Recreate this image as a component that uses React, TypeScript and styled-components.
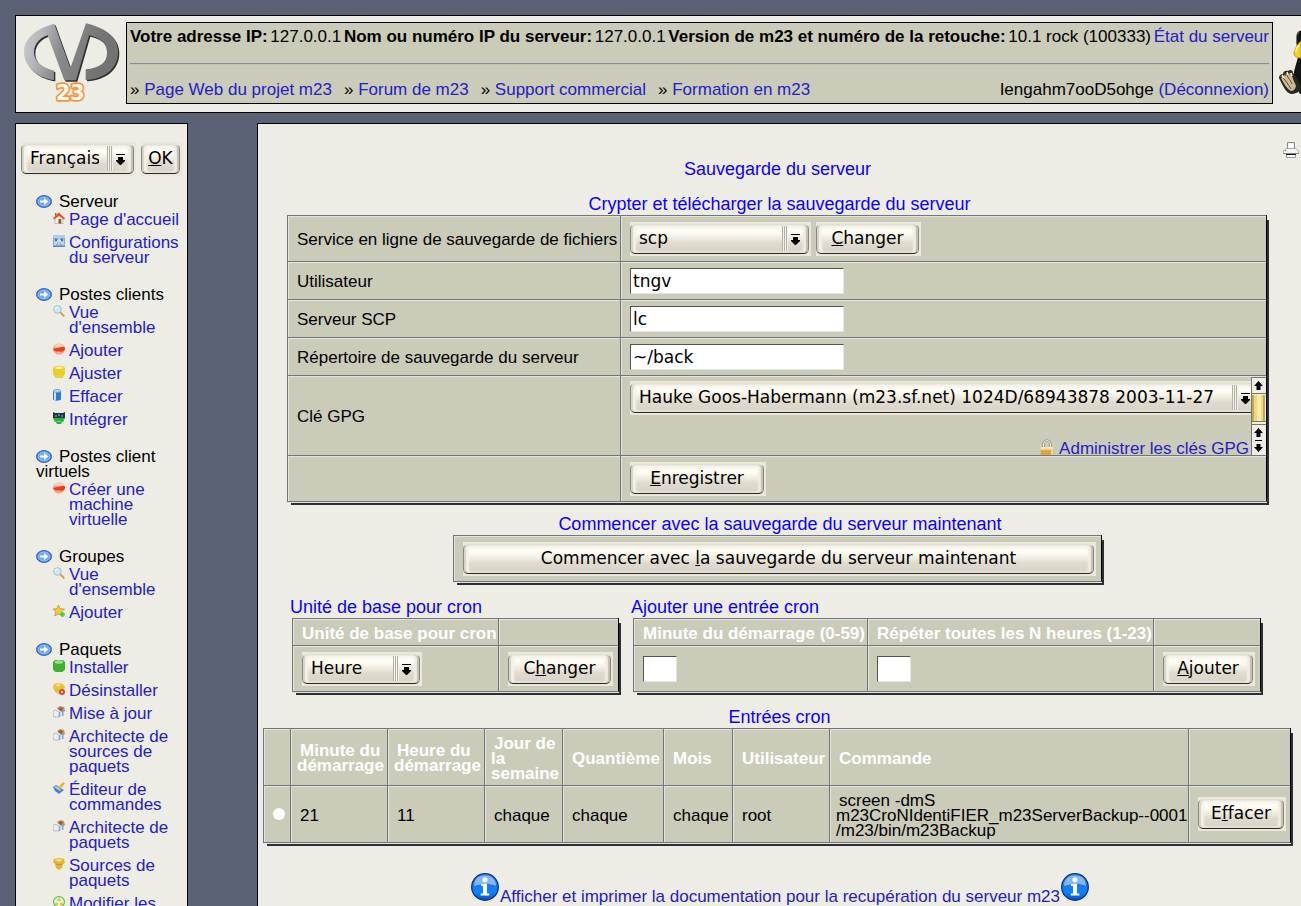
import React from "react";
import styled, { createGlobalStyle } from "styled-components";

const color = {
  page: "#5a6375",
  panel: "#eeede5",
  cell: "#cbcbb9",
  line: "#74757a",
  glint: "#e4e4de",
  shadow: "#2e2f34",
  link: "#2520c6",
  title: "#0b00ff",
  halo: "#ebe7db",
};

const GlobalStyle = createGlobalStyle`
  * { box-sizing: border-box; }
  body {
    margin: 0;
    background: ${color.page};
    color: #000;
    font: 17px/15px "Liberation Sans", Arial, sans-serif;
  }
  a { color: ${color.link}; text-decoration: none; }
  svg { display: block; flex: none; }
`;

const Page = styled.div`
  display: flex;
  flex-direction: column;
  gap: 10px;
  height: 100vh;
  overflow: hidden;
  padding: 15px 0 0 15px;
`;

/* ---------- header ---------- */

const Header = styled.header`
  display: flex;
  flex: none;
  padding: 6px 0 8px;
  background: ${color.panel};
  border: 1px solid #000;
  border-right: 0;
`;

const LogoLink = styled.a`
  flex: none;
  width: 110px;
  padding-left: 6px;
`;

const InfoBox = styled.div`
  flex: 1;
  min-width: 0;
  padding: 4px 3px 3px;
  background: ${color.cell};
  border: 1px solid #000;
  line-height: 20px;
  white-space: nowrap;
`;

const Rule = styled.hr`
  margin: 16px 0 15px;
  border: 0;
  border-top: 1px solid #8a8b92;
  border-bottom: 1px solid #c2c2bc;
`;

const InfoRow = styled.div`
  display: flex;
  justify-content: space-between;
`;

const HeaderLinks = styled.nav`
  display: flex;
  gap: 12px;
`;

const Mascot = styled.div`
  flex: none;
  width: 28px;
  padding: 4px 0 0 6px;
  overflow: hidden;
`;

/* ---------- columns ---------- */

const Columns = styled.div`
  display: flex;
  flex: 1 0 auto;
  gap: 69px;
`;

const Sidebar = styled.aside`
  flex: none;
  width: 173px;
  padding: 18px 5px 0;
  background: ${color.panel};
  border: 1px solid #000;
`;

const Main = styled.main`
  flex: 1;
  min-width: 0;
  padding-top: 18px;
  background: ${color.panel};
  border: 1px solid #000;
  border-right: 0;
`;

/* ---------- controls ---------- */

const Halo = styled.span<{ $w?: number; $fill?: boolean }>`
  display: ${(p) => (p.$fill ? "flex" : "inline-flex")};
  flex: none;
  position: relative;
  width: ${(p) => (p.$w ? p.$w + "px" : "auto")};
  height: 34px;
  margin-left: ${(p) => (p.$fill ? "3px" : "0")};
  padding: 2px 2px 2px 0;
  background: ${color.halo};
  text-indent: 0;
  vertical-align: middle;
`;

const face = `
  width: 100%;
  height: 30px;
  margin: 0;
  border: 1px solid #8b897f;
  border-top-color: #e2dfd2;
  border-bottom-color: #2b2a28;
  border-radius: 5px;
  background: linear-gradient(#f3f0e4 0, #fffef6 20%, #fbf9ee 32%, #dedacd 66%, #d9d5c8 90%, #e6e3d8 100%);
  box-shadow: inset 2px 0 1px #d6d3c7, inset -2px 0 1px #c2bfb3, inset 5px 0 2px #f4f2e9, inset -5px 0 2px #f0ede2;
  color: #000;
  font: 17px/20px "DejaVu Sans", Verdana, sans-serif;
  font-variant-ligatures: none;
`;

const Face = styled.button`
  ${face}
  padding: 0 0 2px;
  text-align: center;
  white-space: nowrap;
`;

const SelectFace = styled.select`
  ${face}
  appearance: none;
  padding: 0 34px 2px 8px;
`;

const Grip = styled.svg`
  position: absolute;
  top: 3px;
  right: 6px;
  pointer-events: none;
`;

const TextInput = styled.input<{ $w: number }>`
  display: block;
  width: ${(p) => p.$w}px;
  height: 26px;
  margin: 0;
  padding: 0 2px;
  border: 1px solid #55554f;
  border-right-color: #e4e4e0;
  border-bottom-color: #e4e4e0;
  border-radius: 0;
  background: #fff;
  color: #000;
  font: 17px/20px "DejaVu Sans", Verdana, sans-serif;
`;

const Radio = styled.input`
  appearance: none;
  display: block;
  width: 12px;
  height: 12px;
  margin: 0;
  border-radius: 50%;
  background: #fdfdfd;
`;

const Controls = styled.div`
  display: flex;
  gap: 5px;
`;

const LangBar = styled.form`
  display: flex;
  gap: 5px;
  margin-bottom: 18px;
`;

function PushButton({ w, fill, children }: { w?: number; fill?: boolean; children: React.ReactNode }) {
  return (
    <Halo $w={w} $fill={fill}>
      <Face type="button">{children}</Face>
    </Halo>
  );
}

function Dropdown({ w, label, value }: { w: number; label: string; value: string }) {
  return (
    <Halo $w={w}>
      <SelectFace aria-label={label}>
        <option>{value}</option>
      </SelectFace>
      <Grip width="23" height="27" viewBox="0 0 23 27">
        <path d="M0 1v25M2 1v25M4 1v25" transform="translate(.5)" stroke="#b5b3a6" />
        <path d="M1 1v25M3 1v25M5 1v25" transform="translate(.5)" stroke="#f4f2e8" />
        <path d="M9 9h9v1H9zM11 12h5v3h2v1l-4 4h-1l-4-4v-1h2z" />
      </Grip>
    </Halo>
  );
}

/* ---------- navigation ---------- */

const NavGroup = styled.section`
  padding-left: 15px;
  margin-bottom: 22px;
`;

const NavHeading = styled.h2`
  margin: 0 0 3px;
  font-size: 17px;
  font-weight: 400;
  line-height: 15px;
  svg { display: inline-block; margin-right: 7px; vertical-align: -1px; }
`;

const NavList = styled.ul`
  display: flex;
  flex-direction: column;
  gap: 8px;
  margin: 0;
  padding: 0 0 0 17px;
  list-style: none;
`;

const NavItem = styled.li`
  display: flex;
  gap: 4px;
`;

type IconName =
  | "home" | "config" | "lens" | "red" | "yellow" | "can" | "alien" | "star"
  | "green" | "remove" | "package" | "pencil" | "source" | "recycle";

const icons: Record<IconName, React.ReactNode> = {
  home: (
    <>
      <path d="M2 6v5.500h8V6L6 2z" fill="#f3efe6" stroke="#b5aa98" strokeWidth=".7" />
      <path d="M0 6.500 5.800.5 12 6.500l-1 1L6 4 1 7.500z" fill="#e8501c" />
      <path d="M2 1h1.500v2L2 4.300z" fill="#c9521f" />
      <path d="M5.500 7h2.700v4.500H5.500z" fill="#8a5a2e" />
    </>
  ),
  config: (
    <>
      <path d="M0 0h12v12H0z" fill="#86a9d6" />
      <path d="M0 0h12v3H0z" fill="#b3cdec" />
      <path d="M2 4v6M5 5l-2 4M6 3v7M7 5l2 4M10 4v6" stroke="#e4edf9" strokeWidth="1.100" />
      <circle cx="3" cy="5" r="1.200" fill="#3f6cab" />
      <circle cx="9" cy="5" r="1.200" fill="#3f6cab" />
      <path d="M0 11.500h12" stroke="#5d80b5" />
    </>
  ),
  lens: (
    <>
      <path d="m7 7 4.300 4.300" stroke="#d09a52" strokeWidth="1.800" />
      <circle cx="4.500" cy="4.500" r="3.800" fill="#cfeaf6" stroke="#9db6c6" strokeWidth=".9" />
      <path d="M2.200 4.200a2.500 2.500 0 0 1 2.500-2.300" stroke="#fff" fill="none" />
    </>
  ),
  red: (
    <>
      <ellipse cx="6" cy="6" rx="6" ry="5.500" fill="#f5a48c" />
      <path d="M0 5.500C3 6.500 8 3 12 4.500 12.500 8.500 9 9 6 8.500 3 8.500 0 8 0 5.500z" fill="#ee3d15" />
      <ellipse cx="6" cy="2.600" rx="4.300" ry="1.600" fill="#f9d2c6" />
    </>
  ),
  yellow: (
    <>
      <path d="M2 0h8l2 2v6l-2.500 4h-7L0 8V2z" fill="#ebcf24" />
      <ellipse cx="6" cy="1.800" rx="4" ry="1.200" fill="#f7f0b8" />
      <path d="M1 9h10l-2 2H3z" fill="#e6d45a" />
    </>
  ),
  can: (
    <>
      <path d="M0 2v8.500c1.500 1.500 6.500 1.500 8 0V2z" fill="#2d79d4" />
      <path d="M1 3v7.500l2 .7V3z" fill="#cfe6fb" />
      <ellipse cx="4" cy="1.900" rx="3.800" ry="1.500" fill="#b9d7f3" stroke="#4683c4" strokeWidth=".6" />
    </>
  ),
  alien: (
    <>
      <path d="M0 0 2 1h8l2-1v6H0z" fill="#20323a" />
      <path d="M2 3h2v2H2zM5 2h2v2H5zM8 3h2v2H8z" fill="#4f7f9a" />
      <path d="M0 6h12l-2 4H9l-1 2H4l-1-2H2z" fill="#21b53c" />
      <path d="M4 9h4v1H4z" fill="#6ee66b" />
    </>
  ),
  star: (
    <>
      <path d="m5.500 0 1.600 3.700 4.400.3-3.200 2.800 1 4-3.800-2L1.800 11l1-4.200L0 4l4-.4z" fill="#f2cb30" stroke="#b88f28" strokeWidth=".7" />
      <path d="M7 8.500h1.500V7h2v1.500H12v2h-1.500V12h-2v-1.500H7z" fill="#2fd23c" />
    </>
  ),
  green: (
    <>
      <path d="M2 0h8l2 2v7.500L9.500 12h-7L0 9.500V2z" fill="#3fb12c" />
      <ellipse cx="6" cy="2" rx="4.200" ry="1.800" fill="#9fd6a2" />
    </>
  ),
  remove: (
    <>
      <path d="m1 1 4-1 5 1 2 3-2 4-4 3-4-2-2-4z" fill="#eebf38" />
      <path d="m2 2 3-1 3 1-3 2z" fill="#f8e494" />
      <circle cx="9" cy="9" r="3" fill="#e6452c" />
      <path d="M8 8l2 2M10 8l-2 2" stroke="#fff" strokeWidth=".9" />
    </>
  ),
  package: (
    <>
      <path d="m4 2 3-2 4 1 1 4-3 2z" fill="#c09460" />
      <path d="m5 3 3-2 2 2-2 2z" fill="#8a6238" />
      <path d="M0 6c0-2 3-2 4-1l2 1v5H1c-1-1-1-4-1-5z" fill="#eceef1" stroke="#a9adb5" strokeWidth=".8" />
      <path d="M6 6h1.500v5H6zM9 5h1.500v5H9z" fill="#7aa3dc" />
      <path d="M7.500 6H9v5H7.500z" fill="#dbe6f5" />
    </>
  ),
  pencil: (
    <>
      <path d="M0 5l3-2 3 2 5 3-5 4L2 9z" fill="#4d7fd0" />
      <path d="m1 5 2-1 5 4-1 1z" fill="#b5cdf0" />
      <path d="m5 5.500 5-5.500 2 1.500-5 6z" fill="#efb52a" />
    </>
  ),
  source: (
    <>
      <path d="m1 1 5-1 5 1 1 4-2 1-1 4-3 2-3-2-1-4-2-2z" fill="#e5b52c" />
      <path d="m2 2 4-1 4 1-4 2z" fill="#f9e48e" />
      <path d="M3 6l3 1 3-1" stroke="#b5841c" fill="none" strokeWidth=".8" />
    </>
  ),
  recycle: (
    <>
      <circle cx="6" cy="6" r="5.400" fill="#effbe8" stroke="#3fcf3a" strokeWidth="1.200" />
      <circle cx="6" cy="3.800" r="1.600" fill="#e8b92c" />
      <circle cx="3.600" cy="8" r="1.600" fill="#e8b92c" />
      <circle cx="8.400" cy="8" r="1.600" fill="#e8b92c" />
    </>
  ),
};

function ArrowBadge() {
  return (
    <svg width="16" height="13" viewBox="0 0 16 13" aria-hidden="true">
      <ellipse cx="8" cy="6.500" rx="7.600" ry="6" fill="#3f7fe6" stroke="#2a50ac" strokeWidth=".8" />
      <ellipse cx="8" cy="6.500" rx="5.800" ry="4.500" fill="#6ba8fa" stroke="#b9d4fb" strokeWidth=".7" />
      <path d="M4 5.500h4V3l4.300 3.500L8 10V7.500H4z" fill="#fff" />
    </svg>
  );
}

const nav: { title: string; items: [IconName, string][] }[] = [
  { title: "Serveur", items: [["home", "Page d'accueil"], ["config", "Configurations du serveur"]] },
  {
    title: "Postes clients",
    items: [["lens", "Vue d'ensemble"], ["red", "Ajouter"], ["yellow", "Ajuster"], ["can", "Effacer"], ["alien", "Intégrer"]],
  },
  { title: "Postes client virtuels", items: [["red", "Créer une machine virtuelle"]] },
  { title: "Groupes", items: [["lens", "Vue d'ensemble"], ["star", "Ajouter"]] },
  {
    title: "Paquets",
    items: [
      ["green", "Installer"],
      ["remove", "Désinstaller"],
      ["package", "Mise à jour"],
      ["package", "Architecte de sources de paquets"],
      ["pencil", "Éditeur de commandes"],
      ["package", "Architecte de paquets"],
      ["source", "Sources de paquets"],
      ["recycle", "Modifier les"],
    ],
  },
];

/* ---------- main content ---------- */

const PrintBar = styled.div`
  display: flex;
  justify-content: flex-end;
  padding-right: 2px;
`;

const Body = styled.div`
  display: flex;
  flex-direction: column;
  align-items: center;
  gap: 12px;
  padding: 1px 4px 0 0;
`;

const Heading = styled.h1`
  margin: 0 0 3px;
  color: ${color.title};
  font-size: 18px;
  font-weight: 400;
  line-height: 20px;
`;

const Block = styled.section<{ $inset?: string; $fit?: boolean; $spaced?: boolean }>`
  width: ${(p) => (p.$fit ? "auto" : "100%")};
  margin-top: ${(p) => (p.$spaced ? "3px" : "0")};
  padding: ${(p) => p.$inset || "0"};
`;

const BlockTitle = styled.h2<{ $left?: boolean }>`
  margin: 0;
  padding-left: ${(p) => (p.$left ? "0" : "5px")};
  color: ${color.title};
  font-size: 18px;
  font-weight: 400;
  line-height: 21px;
  text-align: ${(p) => (p.$left ? "left" : "center")};
`;

const Pair = styled.div`
  display: flex;
  gap: 10px;
  margin-top: 3px;
  padding-right: 2px;
`;

const Indent = styled.div`
  padding: 0 2px;
`;

const Grid = styled.table<{ $w?: number }>`
  width: ${(p) => (p.$w ? p.$w + "px" : "100%")};
  table-layout: fixed;
  border-collapse: separate;
  border-spacing: 0;
  border-right: 1px solid #000;
  border-bottom: 1px solid ${color.line};
  background: ${color.cell};
  box-shadow: 0 1px 0 ${color.glint}, 3px 4px 0 -1px ${color.shadow};
`;

const cell = `
  padding: 0 0 0 6px;
  border: 0 solid ${color.line};
  border-width: 1px 0 0 1px;
  box-shadow: inset 1px 1px 0 ${color.glint};
  text-align: left;
  text-indent: 3px;
  vertical-align: middle;
`;

const Td = styled.td<{ $h: number }>`
  ${cell}
  height: ${(p) => p.$h}px;
  & > ${Controls}, & > ${TextInput}, & > ${Radio} {
    margin-left: 3px;
    text-indent: 0;
  }
`;

const TextCell = styled(Td)`
  padding-top: 2px;
`;

const LabelCell = styled.th<{ $h: number }>`
  ${cell}
  height: ${(p) => p.$h}px;
  padding-top: 2px;
  font-weight: 400;
`;

const HeadCell = styled.th<{ $h: number }>`
  ${cell}
  height: ${(p) => p.$h}px;
  padding-top: 2px;
  color: #fff;
  font-weight: 700;
`;

const StartCell = styled(Td)`
  padding-right: 5px;
`;

const KeyCell = styled.td`
  ${cell}
  height: 80px;
  padding: 1px 0 0 9px;
  text-indent: 0;
`;

const KeyPane = styled.div`
  display: flex;
  height: 78px;
  overflow: hidden;
`;

const KeyContent = styled.div`
  flex: 1;
  min-width: 0;
  padding-top: 4px;
  overflow: hidden;
`;

const KeyLink = styled.a`
  display: flex;
  justify-content: flex-end;
  gap: 5px;
  margin-top: 24px;
  padding-right: 2px;
  line-height: 20px;
`;

const Token = styled.span`
  white-space: nowrap;
`;

const DocLink = styled.a`
  display: flex;
  gap: 1px;
  margin-top: 18px;
  padding-left: 5px;
  span { padding-top: 14px; line-height: 20px; }
`;

function Logo() {
  return (
    <svg width="100" height="82" viewBox="66 66 300 246" role="img" aria-label="m23">
      <defs>
        <linearGradient id="metal" x1="72" y1="100" x2="300" y2="170" gradientUnits="userSpaceOnUse">
          <stop offset="0" stopColor="#c9cbcc" />
          <stop offset=".22" stopColor="#b4b6b8" />
          <stop offset=".5" stopColor="#8a8b8c" />
          <stop offset="1" stopColor="#737373" />
        </linearGradient>
        <path
          id="mark"
          d="M160 72C110 85 72 115 72 155C72 205 120 235 162 240L162 212C130 204 102 188 102 157C102 131 122 112 143 106L193 241L228 241L267 106C300 112 321 130 321 158C321 187 300 204 257 208L257 240C315 236 354 205 354 155C354 108 310 82 258 70L211 205L163 72Z"
        />
      </defs>
      <use href="#mark" x="4" y="4" fill="#2f2f30" />
      <use href="#mark" fill="url(#metal)" />
      <text
        x="211"
        y="300"
        textAnchor="middle"
        fontFamily="DejaVu Sans, sans-serif"
        fontWeight="700"
        fontSize="62"
        fill="#fffbe6"
        stroke="#f29444"
        strokeWidth="10"
        strokeLinejoin="round"
        paintOrder="stroke"
      >
        23
      </text>
    </svg>
  );
}

function Penguin() {
  return (
    <svg width="66" height="72" viewBox="0 0 66 72" aria-hidden="true">
      <path d="M18 7c2-3 8-4 14-3v64H21C16 58 13 50 16 42c2-8 4-12 3-18-2-5-2-11-1-17z" fill="#141414" />
      <path d="M20 6c-3 3-3 6-2 10" stroke="#777" fill="none" strokeWidth="1" />
      <path d="M22 15c-3 2-7 9-7 13 0 2 3 4 7 4z" fill="#f4d21c" stroke="#a98a12" strokeWidth=".7" />
      <path d="M20 19c-2 2-3 5-3 7" stroke="#fff6a8" fill="none" strokeWidth="1.500" />
      <path d="M0 52c0-3 2-4 4-4 0-3 3-4 5-3 2-2 5-1 5 2 4 4 6 9 8 14-1 5-5 7-10 7-5-1-8-8-12-16z" fill="#2a2620" />
      <path d="M2 52c0-2 2-3 3-2 1-3 3-3 4-2 2-2 4 0 4 2 1 4 3 7 4 10-1 4-3 5-5 5-4-2-7-7-10-13z" fill="#cdbb96" />
      <path d="M4 52c3 3 5 6 8 11M8 49c1 3 4 6 5 9M1 50l2 2M6 47l1 3M11 46v3" stroke="#5e4824" fill="none" />
      <path d="M3 49l2 3M8 46l1 3M12 47l1 3" stroke="#fff" strokeWidth="1.400" />
    </svg>
  );
}

function Printer() {
  return (
    <svg width="16" height="16" viewBox="0 0 16 16" aria-hidden="true">
      <path d="M4.500.5h7v6h-7z" fill="#fafafa" stroke="#8a8a8a" />
      <path d="M3 6.500h10l2.500 2.500v2.500H.5V9z" fill="#f4f4f4" stroke="#aaa" />
      <path d="M.5 11.500h15" stroke="#888" />
      <path d="M3 12.500h10" stroke="#111" />
      <path d="M3.500 13v2.500h9V13" fill="#fdfdfd" stroke="#999" />
      <path d="M2 8.500h1" stroke="#57b04a" />
    </svg>
  );
}

function Lock() {
  return (
    <svg width="14" height="17" viewBox="0 0 14 17" aria-hidden="true">
      <path d="M3.500 9V5a3.500 3.500 0 0 1 7 0v4" fill="none" stroke="#8d8d88" strokeWidth="2.200" />
      <path d="M3.500 8V5a3.500 3.500 0 0 1 7 0v3" fill="none" stroke="#f0f0ea" strokeWidth="1" />
      <path d="M.5 8h13v8H.5z" fill="#eab04a" />
      <path d="M.5 8h13v2.500H.5z" fill="#f7e4b0" />
      <path d="M1 12.500h11M1 14.500h11" stroke="#d9952f" />
      <path d="M11 10h2v6h-2z" fill="#e9d9b0" />
    </svg>
  );
}

function InfoBadge({ id }: { id: string }) {
  return (
    <svg width="28" height="28" viewBox="0 0 28 28" aria-hidden="true">
      <defs>
        <linearGradient id={id} x1="0" y1="0" x2="0" y2="1">
          <stop offset="0" stopColor="#3f8fe4" />
          <stop offset=".45" stopColor="#1c78e6" />
          <stop offset=".7" stopColor="#0a86ff" />
          <stop offset="1" stopColor="#0b4fb8" />
        </linearGradient>
      </defs>
      <circle cx="14" cy="14" r="13.300" fill={`url(#${id})`} stroke="#0c2f86" strokeWidth="1.300" />
      <path d="M3 13C3 6 8 2.500 14 2.500S25 6 25 13c-6-3-15-2-22 0z" fill="#a9d0f6" opacity=".7" />
      <circle cx="14" cy="6.800" r="2.600" fill="#fff" />
      <path d="M10 11h6v9.500h2.300V22.500H9.700V20.500H12V13h-2z" fill="#fff" />
    </svg>
  );
}

function Scroller() {
  return (
    <svg width="15" height="78" viewBox="0 0 15 78" aria-hidden="true">
      <path d="M0 0h15v78H0z" fill="#efede4" />
      <path d="M.5 78V.5H15M0 16.500h15M0 44.500h15M0 47.500h15" stroke="#77776f" fill="none" />
      <path d="M7.500 4 12 9H9.500v4h-4V9H3z" />
      <path d="M1 18h13v26H1z" fill="#f0d87c" />
      <path d="M1 18h2v26H1zM12 18h2v26h-2z" fill="#c4a750" />
      <path d="M6 18h4v26H6z" fill="#fbecaa" />
      <path d="M7.500 51 12 56H9.500v4h-4v-4H3zM4 63h7v1H4zM5.500 67h4v3H12l-4.500 5L3 70h2.500z" />
    </svg>
  );
}

function TopBar() {
  const links = ["Page Web du projet m23", "Forum de m23", "Support commercial", "Formation en m23"];
  return (
    <Header>
      <LogoLink href="#"><Logo /></LogoLink>
      <InfoBox>
        <InfoRow>
          <b>Votre adresse IP:</b>
          <span>127.0.0.1</span>
          <b>Nom ou numéro IP du serveur:</b>
          <span>127.0.0.1</span>
          <b>Version de m23 et numéro de la retouche:</b>
          <span>10.1 rock (100333)</span>
          <a href="#">État du serveur</a>
        </InfoRow>
        <Rule />
        <InfoRow>
          <HeaderLinks>
            {links.map((l) => (
              <span key={l}>» <a href="#">{l}</a></span>
            ))}
          </HeaderLinks>
          <span>Iengahm7ooD5ohge <a href="#">(Déconnexion)</a></span>
        </InfoRow>
      </InfoBox>
      <Mascot><Penguin /></Mascot>
    </Header>
  );
}

function Navigation() {
  return (
    <Sidebar>
      <LangBar>
        <Dropdown w={115} label="Langue" value="Français" />
        <PushButton w={41}><u>O</u>K</PushButton>
      </LangBar>
      <nav>
        {nav.map((group) => (
          <NavGroup key={group.title}>
            <NavHeading><ArrowBadge />{group.title}</NavHeading>
            <NavList>
              {group.items.map(([icon, text]) => (
                <NavItem key={text}>
                  <svg width="12" height="12" viewBox="0 0 12 12" aria-hidden="true">{icons[icon]}</svg>
                  <a href="#">{text}</a>
                </NavItem>
              ))}
            </NavList>
          </NavGroup>
        ))}
      </nav>
    </Sidebar>
  );
}

const uploadFields: [string, string, string][] = [
  ["user", "Utilisateur", "tngv"],
  ["host", "Serveur SCP", "lc"],
  ["path", "Répertoire de sauvegarde du serveur", "~/back"],
];

function UploadForm() {
  return (
    <Block $inset="0 30px 0 29px">
      <BlockTitle>Crypter et télécharger la sauvegarde du serveur</BlockTitle>
      <Grid>
        <colgroup><col style={{ width: 333 }} /><col /></colgroup>
        <tbody>
          <tr>
            <LabelCell scope="row" $h={46}>Service en ligne de sauvegarde de fichiers</LabelCell>
            <Td $h={46}>
              <Controls>
                <Dropdown w={181} label="Service en ligne de sauvegarde de fichiers" value="scp" />
                <PushButton w={105}><u>C</u>hanger</PushButton>
              </Controls>
            </Td>
          </tr>
          {uploadFields.map(([id, label, value]) => (
            <tr key={id}>
              <LabelCell scope="row" $h={38}><label htmlFor={id}>{label}</label></LabelCell>
              <Td $h={38}><TextInput id={id} $w={214} defaultValue={value} /></Td>
            </tr>
          ))}
          <tr>
            <LabelCell scope="row" $h={80}>Clé GPG</LabelCell>
            <KeyCell>
              <KeyPane>
                <KeyContent>
                  <Dropdown w={631} label="Clé GPG" value="Hauke Goos-Habermann (m23.sf.net) 1024D/68943878 2003-11-27" />
                  <KeyLink href="#"><Lock />Administrer les clés GPG</KeyLink>
                </KeyContent>
                <Scroller />
              </KeyPane>
            </KeyCell>
          </tr>
          <tr>
            <LabelCell scope="row" $h={46} />
            <Td $h={46}><PushButton w={136}><u>E</u>nregistrer</PushButton></Td>
          </tr>
        </tbody>
      </Grid>
    </Block>
  );
}

function CronUnit() {
  return (
    <Block $fit>
      <BlockTitle $left>Unité de base pour cron</BlockTitle>
      <Indent>
        <Grid $w={327}>
          <colgroup><col style={{ width: 206 }} /><col /></colgroup>
          <thead>
            <tr><HeadCell $h={27}>Unité de base pour cron</HeadCell><HeadCell $h={27} /></tr>
          </thead>
          <tbody>
            <tr>
              <Td $h={46}><Dropdown w={120} label="Unité de base pour cron" value="Heure" /></Td>
              <Td $h={46}><PushButton w={105}>C<u>h</u>anger</PushButton></Td>
            </tr>
          </tbody>
        </Grid>
      </Indent>
    </Block>
  );
}

function CronAdd() {
  return (
    <Block $fit>
      <BlockTitle $left>Ajouter une entrée cron</BlockTitle>
      <Indent>
        <Grid $w={628}>
          <colgroup><col style={{ width: 234 }} /><col style={{ width: 286 }} /><col /></colgroup>
          <thead>
            <tr>
              <HeadCell $h={27}><label htmlFor="minute">Minute du démarrage (0-59)</label></HeadCell>
              <HeadCell $h={27}><label htmlFor="repeat">Répéter toutes les N heures (1-23)</label></HeadCell>
              <HeadCell $h={27} />
            </tr>
          </thead>
          <tbody>
            <tr>
              <Td $h={46}><TextInput id="minute" $w={34} /></Td>
              <Td $h={46}><TextInput id="repeat" $w={34} /></Td>
              <Td $h={46}><PushButton w={92}><u>A</u>jouter</PushButton></Td>
            </tr>
          </tbody>
        </Grid>
      </Indent>
    </Block>
  );
}

const cronColumns: [string, number?][] = [
  ["Minute du démarrage", 97],
  ["Heure du démarrage", 97],
  ["Jour de la semaine", 78],
  ["Quantième", 101],
  ["Mois", 69],
  ["Utilisateur", 97],
  ["Commande"],
];

const cronEntry: React.ReactNode[] = [
  "21",
  "11",
  "chaque",
  "chaque",
  "chaque",
  "root",
  <>screen -dmS <Token>m23CroNIdentiFIER_m23ServerBackup--0001</Token> /m23/bin/m23Backup</>,
];

function CronEntries() {
  return (
    <Block $spaced $inset="0 6px 0 5px">
      <BlockTitle>Entrées cron</BlockTitle>
      <Grid>
        <colgroup>
          <col style={{ width: 27 }} />
          {cronColumns.map(([name, w]) => <col key={name} style={{ width: w }} />)}
          <col style={{ width: 102 }} />
        </colgroup>
        <thead>
          <tr>
            <HeadCell $h={57} />
            {cronColumns.map(([name]) => <HeadCell key={name} $h={57}>{name}</HeadCell>)}
            <HeadCell $h={57} />
          </tr>
        </thead>
        <tbody>
          <tr>
            <Td $h={57}><Radio type="radio" name="entry" aria-label="Entrée 1" /></Td>
            {cronEntry.map((v, i) => <TextCell key={i} $h={57}>{v}</TextCell>)}
            <Td $h={57}><PushButton w={88}>E<u>f</u>facer</PushButton></Td>
          </tr>
        </tbody>
      </Grid>
    </Block>
  );
}

export default function App() {
  return (
    <>
      <GlobalStyle />
      <Page>
        <TopBar />
        <Columns>
          <Navigation />
          <Main>
            <PrintBar><a href="#" aria-label="Imprimer"><Printer /></a></PrintBar>
            <Body>
              <Heading>Sauvegarde du serveur</Heading>
              <UploadForm />
              <Block $fit>
                <BlockTitle>Commencer avec la sauvegarde du serveur maintenant</BlockTitle>
                <Grid $w={649}>
                  <tbody>
                    <tr>
                      <StartCell $h={46}>
                        <PushButton fill>Commencer avec <u>l</u>a sauvegarde du serveur maintenant</PushButton>
                      </StartCell>
                    </tr>
                  </tbody>
                </Grid>
              </Block>
              <Pair>
                <CronUnit />
                <CronAdd />
              </Pair>
              <CronEntries />
              <DocLink href="#">
                <InfoBadge id="info-start" />
                <span>Afficher et imprimer la documentation pour la recupération du serveur m23</span>
                <InfoBadge id="info-end" />
              </DocLink>
            </Body>
          </Main>
        </Columns>
      </Page>
    </>
  );
}
